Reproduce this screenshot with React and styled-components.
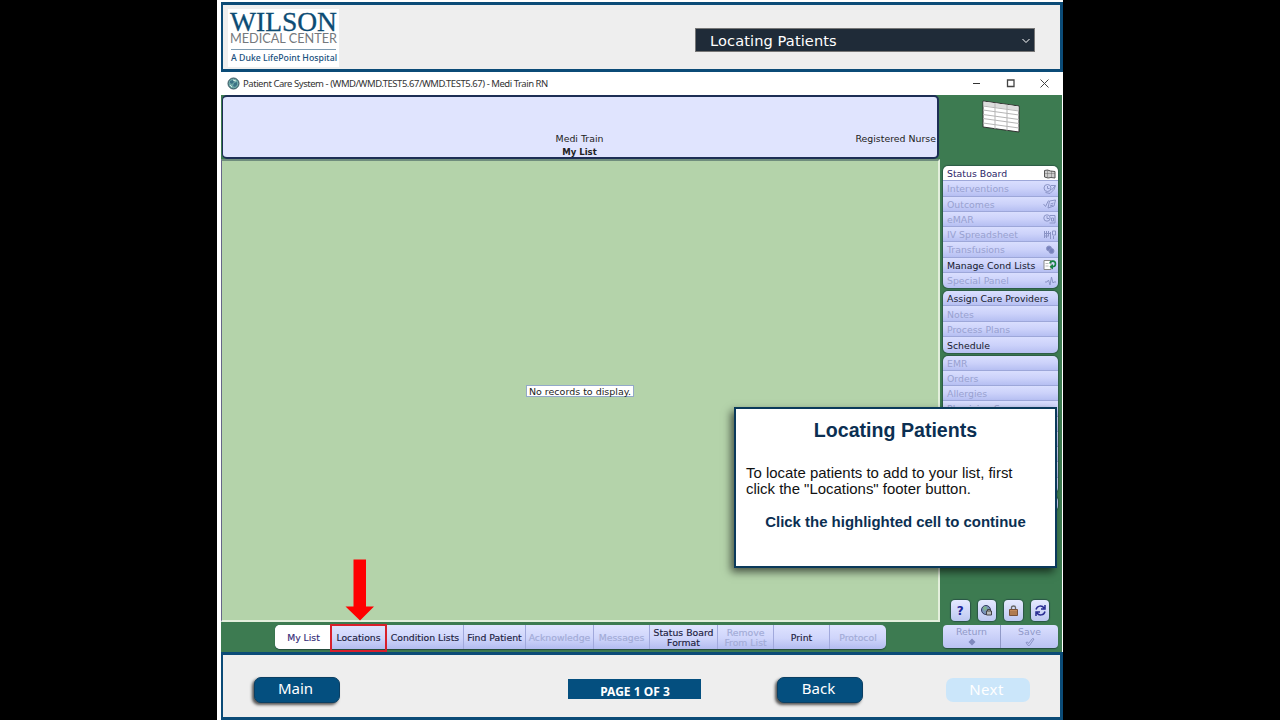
import React from 'react'
import styled, { createGlobalStyle, css } from 'styled-components'

const GlobalStyle = createGlobalStyle`
    * { box-sizing: border-box; }
    body {
        margin: 0;
        background: #000;
        overflow: hidden;
        font-family: "DejaVu Sans", Verdana, sans-serif;
    }
    svg { display: block; flex: none; }
`

const Page = styled.div`
    display: flex;
    justify-content: center;
    width: 1280px;
    height: 720px;
`

const Frame = styled.div`
    display: flex;
    flex-direction: column;
    width: 846px;
    height: 720px;
    padding: 2px 0 0 4px;
    background: #fff;
`

const Header = styled.header`
    display: flex;
    justify-content: space-between;
    height: 70px;
    padding: 4px 25px 0 5px;
    background: #eee;
    border: 3px solid #0b4b77;
    border-left-width: 2px;
`

const LogoBox = styled.div`
    display: flex;
    flex-direction: column;
    width: 111px;
    height: 58px;
    background: #fff;
`

const LessonSelect = styled.div`
    display: flex;
    align-items: center;
    justify-content: space-between;
    width: 340px;
    height: 24px;
    margin-top: 19px;
    padding: 1px 4px 0 14px;
    background: #1f2b38;
    border: 1px solid #767676;
    color: #fff;
    font-size: 14.6px;
    letter-spacing: 0.1px;
`

const TitleBar = styled.div`
    display: flex;
    align-items: center;
    height: 23px;
    padding: 0 14px 0 6px;
    gap: 3px;
    color: #333;
    font: 9.5px "Noto Sans", sans-serif;
    letter-spacing: -0.46px;
`

const WindowControls = styled.div`
    display: flex;
    gap: 25px;
    margin-left: auto;
`

const Workspace = styled.div`
    display: flex;
    height: 557px;
    margin-right: 1px;
    background: #3d7b51;
`

const MainColumn = styled.main`
    display: flex;
    flex-direction: column;
    width: 719px;
`

const PatientPanel = styled.div`
    display: grid;
    grid-template-columns: 1fr 1fr 1fr;
    align-content: end;
    height: 64px;
    margin-right: 1px;
    margin-left: 1px;
    padding-right: 1px;
    background: #e0e4fe;
    border: 2px solid #1d2e55;
    border-left-width: 1px;
    border-radius: 5px;
    color: #222;
    text-align: center;
`

const PanelText = styled.span`
    grid-column: ${({ $col }) => $col};
    text-align: ${({ $align }) => $align || 'center'};
    font-weight: ${({ $bold }) => ($bold ? 'bold' : 'normal')};
    font-size: ${({ $bold }) => ($bold ? '8.5px' : '9.4px')};
    line-height: ${({ $bold }) => ($bold ? '9px' : '19px')};
    white-space: nowrap;
`

const RecordsArea = styled.div`
    display: flex;
    align-items: center;
    justify-content: center;
    height: 463px;
    padding-top: 1px;
    background: #b4d3aa;
    border: 2px solid #e3efdc;
    border-top-color: #6f8d7d;
    border-left: 1px solid #668;
`

const EmptyNote = styled.div`
    height: 12px;
    padding: 0 2px;
    background: #fff;
    border: 1px solid #93a9c9;
    color: #222;
    font-size: 9.5px;
    line-height: 11px;
    white-space: nowrap;
`

const FooterTabs = styled.div`
    display: flex;
    width: 611px;
    height: 24px;
    margin: 3px 0 0 54px;
    background: linear-gradient(#dfe3ff, #cfd5fb 55%, #b3bcf0);
    border-radius: 5px;
    box-shadow: 0 1px 1px #23473a;
`

const FooterTab = styled.div`
    display: flex;
    flex: none;
    align-items: center;
    justify-content: center;
    width: ${({ $width }) => $width}px;
    padding-top: 1px;
    border-right: 1px solid #a1a9dc;
    color: ${({ $disabled }) => ($disabled ? '#a2abd7' : '#1c2140')};
    font-size: 9.3px;
    line-height: 10px;
    text-align: center;
    white-space: pre-line;
    -webkit-text-stroke: 0.15px currentColor;

    ${({ $active }) => $active && css`
        padding-left: 2px;
        background: #fff;
        border-right: 0;
        border-radius: 5px 0 0 5px;
        color: #352c78;
    `}

    ${({ $highlight }) => $highlight && css`
        margin: -1px 0 -3px;
        padding-bottom: 2px;
        border: 2px solid #d81f2b;
    `}

    &:last-child { border-right: 0; }
`

const Arrow = styled.svg`
    position: absolute;
    left: 345px;
    top: 559px;
`

const Sidebar = styled.aside`
    display: flex;
    flex-direction: column;
    width: 122px;
    padding: 4px 4px 0 3px;
`

const BoardIcon = styled.div`
    height: 67px;
    padding-left: 37px;
`

const MenuGroup = styled.div`
    flex: none;
    margin-bottom: 3px;
    overflow: hidden;
    border-radius: 5px;
    box-shadow: 0 0 1px 1px #2c5b45;
`

const MenuRow = styled.div`
    display: flex;
    align-items: center;
    justify-content: space-between;
    height: ${({ $height }) => $height}px;
    padding: 2px 1px 0 4px;
    background: ${({ $active }) => ($active ? '#fff' : 'linear-gradient(#d9defe, #ccd2fa 50%, #b6bff2)')};
    border-bottom: 1px solid #9da7d9;
    color: ${({ $active, $enabled }) => ($active ? '#2a2467' : $enabled ? '#15182c' : '#98a1d0')};
    font-size: 9.35px;
    line-height: 12px;
    white-space: nowrap;

    svg { margin-top: -1px; }
    &:last-child { border-bottom: 0; }
`

const Tools = styled.div`
    display: flex;
    gap: 8px;
    margin: auto 0 4px 8px;
`

const ToolButton = styled.div`
    display: flex;
    align-items: center;
    justify-content: center;
    width: 18.6px;
    height: 21px;
    background: linear-gradient(#e5e9ff, #bdc8f1);
    border-radius: 4px;
    box-shadow: 0 0 1px 1px #2a5545;
    color: #202499;
    font-size: 12px;
    font-weight: bold;
`

const ActionBar = styled.div`
    display: flex;
    height: 23px;
    margin: 0 0 4px;
    background: linear-gradient(#dce0ff, #b9c2f2);
    border-radius: 4px;
    box-shadow: 0 1px 1px #254d40;
`

const Action = styled.div`
    display: flex;
    flex: 1;
    flex-direction: column;
    align-items: center;
    color: #9099c8;
    font-size: 9.4px;
    line-height: 13px;

    & + & { border-left: 1px solid #9099c8; }
`

const Footer = styled.footer`
    display: grid;
    grid-template-columns: 314px 209px 169px 1fr;
    height: 68px;
    padding: 22px 0 0 31px;
    background: #eee;
    border: 3px solid #0b4b77;
    border-left-width: 2px;
`

const NavButton = styled.button`
    width: 86px;
    height: 26px;
    padding: 0 3px 5px 0;
    background: #044f7f;
    border: 1px solid #0b3f63;
    border-radius: 7px;
    box-shadow: -2px 2px 3px #555;
    color: #fff;
    font: 15px "Noto Sans", sans-serif;
    line-height: 20px;

    ${({ $disabled }) => $disabled && css`
        width: 84px;
        height: 24px;
        margin-top: 1px;
        padding-bottom: 3px;
        background: #cbe6fa;
        border: 0;
        box-shadow: none;
        letter-spacing: 0.4px;
    `}
`

const PageCount = styled.div`
    width: 133px;
    height: 20px;
    margin-top: 2px;
    padding: 5px 0 0 1px;
    background: #044f7f;
    color: #fff;
    font: bold 12px "Noto Sans", sans-serif;
    line-height: 16px;
    text-align: center;
`

const Callout = styled.section`
    position: absolute;
    left: 734px;
    top: 407px;
    width: 323px;
    height: 161px;
    padding: 11px 10px;
    background: #fff;
    border: 2px solid #0b3a5b;
    box-shadow: -3px 4px 8px rgba(0, 0, 0, 0.6);
    color: #111;
    font: 14.95px "Liberation Sans", Arial, sans-serif;
    line-height: 16px;

    h2 {
        margin: 0 0 24px;
        color: #0b2f52;
        font-size: 19.6px;
        line-height: 21px;
        text-align: center;
    }
    p { margin: 0; white-space: pre-line; }
    strong {
        display: block;
        margin-top: 17px;
        color: #0b2f52;
        text-align: center;
    }
`

const clinicalMenu = [
    { label: 'Status Board', icon: 'board', active: true },
    { label: 'Interventions', icon: 'clockNote' },
    { label: 'Outcomes', icon: 'checkNote' },
    { label: 'eMAR', icon: 'clockBox' },
    { label: 'IV Spreadsheet', icon: 'sheet' },
    { label: 'Transfusions', icon: 'drop' },
    { label: 'Manage Cond Lists', icon: 'lists', enabled: true },
    { label: 'Special Panel', icon: 'pulse' },
]

const planningMenu = [
    { label: 'Assign Care Providers', enabled: true },
    { label: 'Notes' },
    { label: 'Process Plans' },
    { label: 'Schedule', enabled: true },
]

const chartMenu = [
    { label: 'EMR' }, { label: 'Orders' }, { label: 'Allergies' }, { label: 'Physician S' },
    {}, {}, {}, {}, {},
]

const tabs = [
    { label: 'My List', width: 55, active: true },
    { label: 'Locations', width: 57, highlight: true },
    { label: 'Condition Lists', width: 77 },
    { label: 'Find Patient', width: 62 },
    { label: 'Acknowledge', width: 68, disabled: true },
    { label: 'Messages', width: 56, disabled: true },
    { label: 'Status Board\nFormat', width: 68 },
    { label: 'Remove\nFrom List', width: 56, disabled: true },
    { label: 'Print', width: 56 },
    { label: 'Protocol', width: 56, disabled: true },
]

const iconShapes = {
    board: <g stroke="#555" fill="#ccc"><path d="M1.5 2.5l3-.5 3 1 4.500.5v6.500l-4-.5-3 .5-3.500-1z" /><path d="M4.500 2v7.500M8.500 3v6.500M2 5.500h10" strokeWidth=".4" /></g>,
    clockNote: <g><circle cx="4.500" cy="5" r="3.500" /><path d="M4.500 3v2.500h2M8 2.500h4.500l-1.500 4-4 4-4.500-1M12 3l-3.500 4" /></g>,
    checkNote: <path d="M.5 6l2 2.500 3-6M6.500 3l6-1-1.500 6-6 2zM7.500 6l3-1M7 8l3-1" />,
    clockBox: <g><circle cx="4" cy="5" r="3.200" /><path d="M4 3v2.500h2M7 2.500h5v7.500H6.500M8.500 5h2v3h-2z" /></g>,
    sheet: <path d="M1.500 2v7M3.500 2v7M5.500 2v5M7.500 3v7M9.500 2v4h3V2zM10.500 7v3M1 4.500h6M1 7h5" />,
    drop: <g fill="#7882bd"><circle cx="6" cy="4.500" r="2.500" /><circle cx="8.500" cy="7" r="2.500" /></g>,
    lists: <g><path d="M1 1.500h7v9H1z" fill="#fff" stroke="#888" /><path d="M2.500 4.500h3M2.500 7h3" stroke="#bbb" /><path d="M7 4.500c.5-3.500 5.500-3 5.500.5 0 2-1.500 2.700-3.500 2.700" stroke="#168243" strokeWidth="1.600" /><path d="M10 5v5.500L6.500 7.800z" fill="#168243" stroke="none" /></g>,
    pulse: <path d="M2 7h2l1.500-2 1.500 5 1.500-8 1.500 6 1-1h2" />,
}

const RowIcon = ({ name }) => (
    <svg width="14" height="12" viewBox="0 0 14 12" fill="none" stroke="#8b94c6" strokeWidth="1">
        {iconShapes[name]}
    </svg>
)

const Logo = () => (
    <LogoBox>
        <svg width="111" height="24" viewBox="0 0 111 24" overflow="visible">
            <text x="2" y="21.500" textLength="107" lengthAdjust="spacingAndGlyphs" fill="#0d4c74" fontFamily="Liberation Serif" fontSize="27.500" stroke="#0d4c74" strokeWidth=".3">WILSON</text>
        </svg>
        <svg width="111" height="34" viewBox="0 24 111 34" overflow="visible">
            <text x="2" y="34" textLength="107" lengthAdjust="spacingAndGlyphs" fill="#74787c" fontFamily="Lato" fontSize="12.500">MEDICAL CENTER</text>
            <path d="M3 40.500h105" stroke="#7c9ab0" />
            <text x="3" y="52" textLength="106" lengthAdjust="spacingAndGlyphs" fill="#174f7d" fontFamily="Noto Sans" fontSize="9.300" fontWeight="500">A Duke LifePoint Hospital</text>
        </svg>
    </LogoBox>
)

const Menu = ({ items, height = 15.25 }) => (
    <MenuGroup>
        {items.map(({ label, icon, active, enabled }, i) => (
            <MenuRow key={i} $active={active} $enabled={enabled} $height={height}>
                {label}
                {icon && <RowIcon name={icon} />}
            </MenuRow>
        ))}
    </MenuGroup>
)

const App = () => {
    return (
        <Page>
            <GlobalStyle />
            <Frame>
                <Header>
                    <Logo />
                    <LessonSelect>
                        Locating Patients
                        <svg width="8" height="6" viewBox="0 0 8 6" fill="none" stroke="#fff"><path d="M.5 1L4 4.500 7.500 1" /></svg>
                    </LessonSelect>
                </Header>

                <TitleBar>
                    <svg width="13" height="13" viewBox="0 0 13 13">
                        <circle cx="6.500" cy="6.500" r="5.500" fill="#6fa8a7" stroke="#31505c" />
                        <path d="M3 4l3-1 1 2-2 2-2-1zM7 6l3-1v3L8 10 6 9z" fill="#3d7286" />
                        <path d="M3 8l2 2M6 3l3 1" stroke="#d4ebe4" />
                    </svg>
                    Patient Care System - (WMD/WMD.TEST5.67/WMD.TEST5.67) - Medi Train RN
                    <WindowControls>
                        <svg width="9" height="9" stroke="#333"><path d="M1 4.500h7" /></svg>
                        <svg width="9" height="9" fill="none" stroke="#444" strokeWidth="1.300"><path d="M1.500 1h6.500v6.500h-6.500z" /></svg>
                        <svg width="9" height="9" stroke="#444"><path d="M.5.5l8 8M8.500.5l-8 8" /></svg>
                    </WindowControls>
                </TitleBar>

                <Workspace>
                    <MainColumn>
                        <PatientPanel>
                            <PanelText $col={2}>Medi Train</PanelText>
                            <PanelText $col={3} $align="right">Registered Nurse</PanelText>
                            <PanelText $col={2} $bold>My List</PanelText>
                        </PatientPanel>
                        <RecordsArea>
                            <EmptyNote>No records to display.</EmptyNote>
                        </RecordsArea>
                        <FooterTabs>
                            {tabs.map(({ label, width, active, disabled, highlight }) => (
                                <FooterTab key={label} $width={width} $active={active} $disabled={disabled} $highlight={highlight}>
                                    {label}
                                </FooterTab>
                            ))}
                        </FooterTabs>
                    </MainColumn>

                    <Sidebar>
                        <BoardIcon>
                            <svg width="42" height="36" viewBox="0 0 42 36">
                                <path d="M3 2l36 5v26L3 28z" fill="#fff" stroke="#333" />
                                <path d="M3.500 2.500l35 5v4l-35-5z" fill="#ddd" />
                                <path d="M3 7l36 5M3 11l36 5M3 15.500l36 5M3 19.500l36 5M3 24l36 5M15 4v26M27 5.500v26" stroke="#b5b5b5" fill="none" />
                            </svg>
                        </BoardIcon>
                        <Menu items={clinicalMenu} />
                        <Menu items={planningMenu} height={15.4} />
                        <Menu items={chartMenu} />
                        <Menu items={[{}]} />
                        <Tools>
                            <ToolButton>?</ToolButton>
                            <ToolButton>
                                <svg width="13" height="13" viewBox="0 0 13 13">
                                    <circle cx="6" cy="6" r="4.500" fill="#7893b7" stroke="#333963" />
                                    <path d="M3 3l3-1 1 3-3 2z" fill="#7fb28b" />
                                    <path d="M6.500 7h5v4h-5zM7.500 7V5.500h3V7" fill="#bbb" stroke="#444" />
                                </svg>
                            </ToolButton>
                            <ToolButton>
                                <svg width="11" height="13" viewBox="0 0 11 13">
                                    <path d="M3.500 6V3.500c0-2 4-2 4 0V6" fill="none" stroke="#666" strokeWidth="1.300" />
                                    <path d="M1.500 5.500h8v6h-8z" fill="#c48a59" stroke="#775139" />
                                    <path d="M2 8h7M2 10h7" stroke="#8d5e3c" strokeWidth=".7" />
                                </svg>
                            </ToolButton>
                            <ToolButton>
                                <svg width="13" height="13" viewBox="0 0 13 13" fill="none" stroke="#262a91" strokeWidth="1.500">
                                    <path d="M2 5.500c1-4 6-4.500 8-1.500M11 1v4H7M11 7.500c-1 4-6 4.500-8 1.500M2 12V8h4" />
                                </svg>
                            </ToolButton>
                        </Tools>
                        <ActionBar>
                            <Action>
                                Return
                                <svg width="8" height="8" viewBox="0 0 8 8" fill="#7f89bd"><path d="M4 .5L7.500 4 4 7.500.5 4z" /></svg>
                            </Action>
                            <Action>
                                Save
                                <svg width="10" height="8" viewBox="0 0 10 8" fill="none" stroke="#8b94c6"><path d="M1 4.500L2.500 4l1 1.500L7.500.5l1.500.5-4.500 6.500H3z" /></svg>
                            </Action>
                        </ActionBar>
                    </Sidebar>
                </Workspace>

                <Footer>
                    <NavButton>Main</NavButton>
                    <PageCount>PAGE 1 OF 3</PageCount>
                    <NavButton>Back</NavButton>
                    <NavButton $disabled>Next</NavButton>
                </Footer>
            </Frame>

            <Arrow width="30" height="62" viewBox="0 0 30 62"><path d="M8.500.5h12.500v47h8L15 61.500.5 47.500h8z" fill="#fe0000" /></Arrow>

            <Callout>
                <h2>Locating Patients</h2>
                <p>{'To locate patients to add to your list, first\nclick the "Locations" footer button.'}</p>
                <strong>Click the highlighted cell to continue</strong>
            </Callout>
        </Page>
    )
}

export default App
